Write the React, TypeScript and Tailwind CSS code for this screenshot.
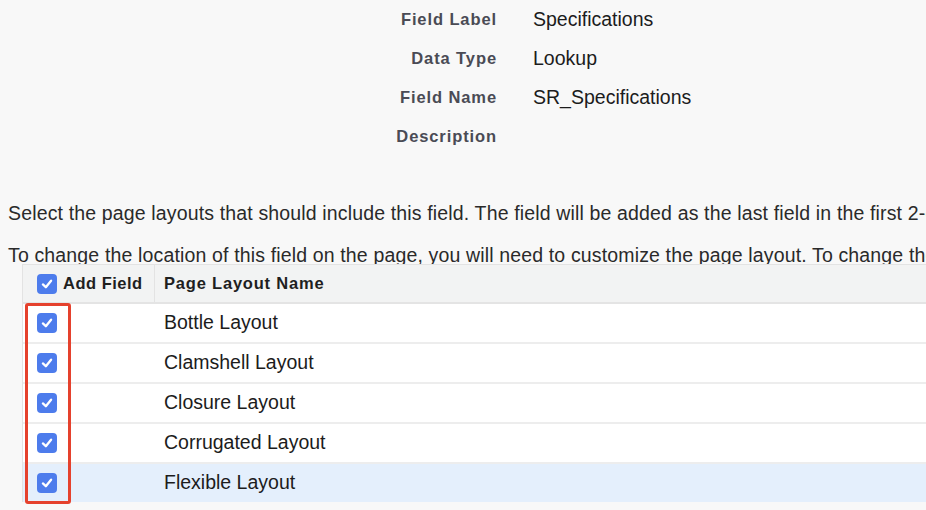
import React from "react";

const fields = [
  { label: "Field Label", value: "Specifications" },
  { label: "Data Type", value: "Lookup" },
  { label: "Field Name", value: "SR_Specifications" },
  { label: "Description", value: "" },
];

const layouts = ["Bottle Layout", "Clamshell Layout", "Closure Layout", "Corrugated Layout", "Flexible Layout"];

function Check() {
  return (
    <span className="flex h-[20px] w-[20px] shrink-0 items-center justify-center rounded-[4px] bg-[#4d7cec]">
      <svg width="14" height="14" viewBox="0 0 12 12" fill="none">
        <path d="M2.5 6.4 L5 8.7 L9.5 3.2" stroke="white" strokeWidth="2" strokeLinecap="round" strokeLinejoin="round" />
      </svg>
    </span>
  );
}

export default function App() {
  return (
    <div className="h-[510px] w-[926px] overflow-hidden bg-[#f8f8f8] text-[#222] font-['Liberation_Sans',Arial,sans-serif]">
      <div className="flex h-[156px] flex-col">
        {fields.map((f) => (
          <div key={f.label} className="flex h-[39px] items-center">
            <div className="w-[497px] whitespace-nowrap text-right text-[16.5px] font-bold tracking-[0.9px] text-[#4a4b55]">
              {f.label}
            </div>
            <div className="whitespace-nowrap pl-[36px] text-[19.5px] text-[#1c1c1c]">{f.value}</div>
          </div>
        ))}
      </div>
      <p className="mt-[48px] whitespace-nowrap pl-[8px] text-[19.5px] leading-[18px] tracking-[0.15px] text-[#2a2a2a]">
        Select the page layouts that should include this field. The field will be added as the last field in the first 2-column section of these page layouts.
      </p>
      <p className="mt-[24px] whitespace-nowrap pl-[8px] text-[19.5px] leading-[18px] tracking-[0.15px] text-[#2a2a2a]">
        To change the location of this field on the page, you will need to customize the page layout. To change the field on the related lists, you will need to customize the related lists.
      </p>
      <div className="relative ml-[22px] border-l border-t border-[#e3e3e3] bg-white">
        <div className="flex h-[39px] items-center border-b-2 border-[#e4e4e4] bg-[#f2f3f3]">
          <div className="flex h-full w-[132px] items-center gap-[6px] border-r border-[#e3e3e3] pl-[14px] text-[16.5px] font-bold tracking-[0.5px] text-[#1f1f1f]">
            <Check />
            Add Field
          </div>
          <div className="whitespace-nowrap pl-[9px] text-[16.5px] font-bold tracking-[0.8px] text-[#1f1f1f]">Page Layout Name</div>
        </div>
        {layouts.map((l, i) => (
          <div
            key={l}
            className={`flex items-center ${i === layouts.length - 1 ? "h-[38px] bg-[#e4effc]" : "h-[40px] border-b-2 border-[#ededed]"}`}
          >
            <div className="flex w-[132px] items-center pl-[14px]">
              <Check />
            </div>
            <div className="whitespace-nowrap pl-[9px] text-[19.5px] text-[#1c1c1c]">{l}</div>
          </div>
        ))}
        <div className="pointer-events-none absolute left-[2px] top-[38px] h-[201px] w-[46px] rounded-[3px] border-[3.5px] border-[#e5412d]" />
      </div>
    </div>
  );
}
